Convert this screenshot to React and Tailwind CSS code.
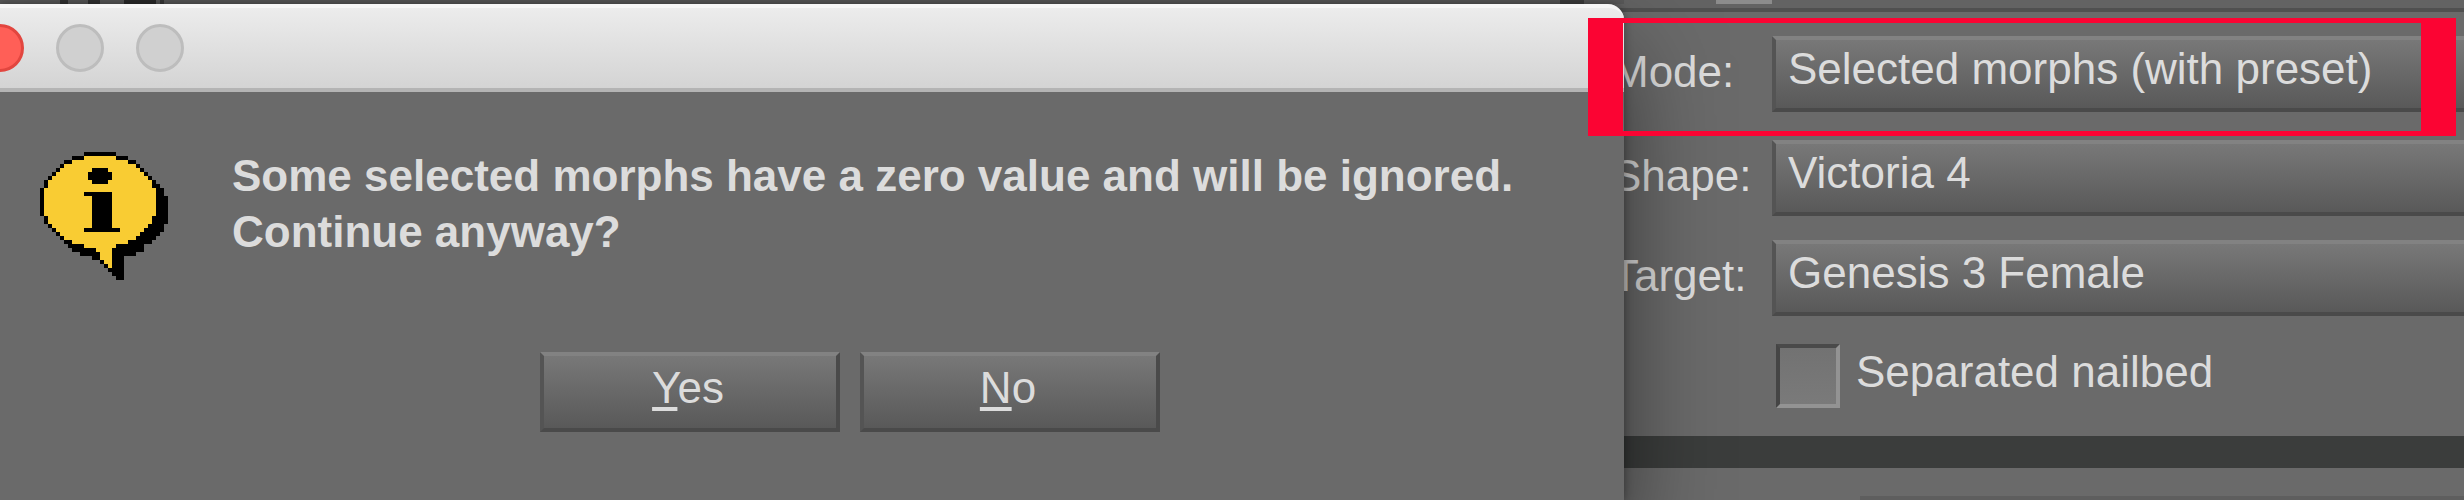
const FONT = "font-['Liberation_Sans',Arial,sans-serif]";

const FIELDS = [
  {
    id: "mode",
    label: "Mode:",
    options: ["Selected morphs (with preset)", "Selected morphs"],
    spacing: "mt-6",
  },
  {
    id: "shape",
    label: "Shape:",
    options: ["Victoria 4", "Genesis"],
    spacing: "mt-7",
  },
  {
    id: "target",
    label: "Target:",
    options: ["Genesis 3 Female", "Genesis 2 Female"],
    spacing: "mt-6",
  },
];

/*** Bubble rows on a 32x32 grid: [outline start, outline end, fill start, fill end] */
const BUBBLE_ROWS = [
  [11, 19, 0, 0],
  [8, 22, 11, 19],
  [6, 24, 8, 22],
  [5, 25, 6, 24],
  [4, 26, 5, 25],
  [3, 27, 4, 26],
  [2, 28, 3, 27],
  [1, 29, 2, 28],
  [1, 30, 2, 28],
  [0, 31, 1, 29],
  [0, 31, 1, 29],
  [0, 32, 1, 29],
  [0, 32, 1, 29],
  [0, 32, 1, 29],
  [0, 32, 1, 29],
  [0, 32, 1, 29],
  [1, 32, 2, 28],
  [1, 32, 2, 28],
  [2, 31, 3, 27],
  [3, 31, 4, 26],
  [4, 30, 5, 25],
  [5, 29, 6, 24],
  [6, 28, 8, 22],
  [7, 26, 11, 19],
  [8, 26, 14, 18],
  [10, 24, 15, 18],
  [13, 21, 15, 18],
  [15, 21, 16, 18],
  [16, 21, 17, 18],
  [17, 21, 0, 0],
  [18, 21, 0, 0],
  [19, 21, 0, 0],
];

const InfoIcon = () => (
  <svg
    viewBox="0 0 32 32"
    className="mt-1 size-32 shrink-0"
    shapeRendering="crispEdges"
    role="img"
    aria-label="Information"
  >
    {BUBBLE_ROWS.map(([x1, x2, f1, f2], y) => (
      <g key={y}>
        <rect x={x1} y={y} width={x2 - x1} height="1" fill="#000" />
        <rect x={f1} y={y} width={f2 - f1} height="1" fill="#f9cc33" />
      </g>
    ))}
    <path d="M13 4h4v1h1v2h-1v1h-4v-1h-1v-2h1z" />
    <path d="M11 10h7v9h2v1h-9v-1h2v-8h-2z" />
  </svg>
);

const DialogButton = ({ accessKey, rest }) => (
  <button
    type="button"
    className="h-20 w-[300px] border-4 border-t-[#828282] border-r-[#4a4a4a] border-b-[#4a4a4a] border-l-[#545454] bg-linear-to-b from-[#787878] to-[#595959] pr-1 pb-2 text-[44px] leading-[56px]"
  >
    <span className="underline decoration-4 underline-offset-4">
      {accessKey}
    </span>
    {rest}
  </button>
);

const TitleBar = () => (
  <header className="flex h-[88px] gap-8 rounded-tr-[16px] border-t-4 border-b-4 border-t-[#f6f6f6] border-b-[#b4b4b4] bg-linear-to-b from-[#ececec] to-[#d4d4d4] pt-4">
    <button
      type="button"
      aria-label="Close"
      className="-ml-6 size-12 rounded-full border-3 border-[#e2463f] bg-[#ff5f57]"
    />
    <button
      type="button"
      aria-label="Minimize"
      className="size-12 rounded-full border-3 border-[#bdbdbd] bg-[#d0d0d0]"
    />
    <button
      type="button"
      aria-label="Zoom"
      className="size-12 rounded-full border-3 border-[#bdbdbd] bg-[#d0d0d0]"
    />
  </header>
);

const ConfirmDialog = () => (
  <div className="relative z-10 flex flex-col">
    <div className="flex h-1 bg-[#5a5a5a]">
      <span className="ml-[60px] w-2 bg-[#333]" />
      <span className="ml-5 w-3 bg-[#333]" />
      <span className="ml-6 w-8 bg-[#2c2c2c]" />
      <span className="ml-1 w-1 bg-[#3a3a3a]" />
      <span className="mr-10 ml-auto w-6 bg-[#3f3f3f]" />
    </div>
    <section
      role="dialog"
      aria-label="Confirm"
      className="flex flex-1 flex-col rounded-tr-[16px] shadow-[0_48px_96px_rgba(0,0,0,0.5),0_0_8px_rgba(0,0,0,0.35)]"
    >
      <TitleBar />
      <div className="flex-1 bg-[#6a6a6a] pt-14">
        <div className="flex gap-16 pl-10">
          <InfoIcon />
          <p className="text-[44px] leading-[56px] font-bold">
            Some selected morphs have a zero value and will be ignored.
            <br />
            Continue anyway?
          </p>
        </div>
        <div className="mt-[72px] flex justify-center gap-5 pb-16 pl-[76px]">
          <DialogButton accessKey="Y" rest="es" />
          <DialogButton accessKey="N" rest="o" />
        </div>
      </div>
    </section>
  </div>
);

const SettingsPanel = () => (
  <div className="relative -ml-3 flex flex-col">
    <div className="flex h-3 border-b-4 border-[#505050] bg-[#636363]">
      <span className="ml-[104px] h-1 w-14 bg-[#8c8c8c]" />
    </div>
    <form>
      {FIELDS.map(({ id, label, options, spacing }) => (
        <div key={id} className={`flex h-[76px] ${spacing}`}>
          <label
            htmlFor={id}
            className="w-40 shrink-0 pt-2 text-[44px] leading-[56px]"
          >
            {label}
          </label>
          <select
            id={id}
            className="min-w-0 flex-1 appearance-none border-4 border-r-0 border-t-[#828282] border-b-[#4a4a4a] border-l-[#545454] bg-linear-to-b from-[#787878] to-[#595959] pb-2.5 pl-3 text-[44px] leading-[56px]"
          >
            {options.map((option) => (
              <option key={option}>{option}</option>
            ))}
          </select>
        </div>
      ))}
      <div className="mt-7 ml-41 flex gap-4">
        <input
          id="nailbed"
          type="checkbox"
          className="size-16 shrink-0 appearance-none border-4 border-t-[#4a4a4a] border-r-[#939393] border-b-[#939393] border-l-[#454545] bg-linear-to-b from-[#727272] to-[#7a7a7a]"
        />
        <label htmlFor="nailbed" className="text-[44px] leading-[56px]">
          Separated nailbed
        </label>
      </div>
    </form>
    <div className="mt-7 h-8 bg-[#3b3d3c]" />
    <div className="pt-7">
      <div className="ml-[248px] h-1 bg-[#5e5e5e]" />
    </div>
    {/* marker around the Mode row */}
    <div className="pointer-events-none absolute top-[18px] right-2 -left-6 z-20 h-[118px] border-x-[35px] border-y-[5px] border-[#fb0433]" />
  </div>
);

const App = () => (
  <main
    className={`grid min-h-screen grid-cols-[1624fr_840fr] overflow-hidden bg-[#6a6a6a] text-[#dcdcdc] ${FONT}`}
  >
    <ConfirmDialog />
    <SettingsPanel />
  </main>
);

export default App;
